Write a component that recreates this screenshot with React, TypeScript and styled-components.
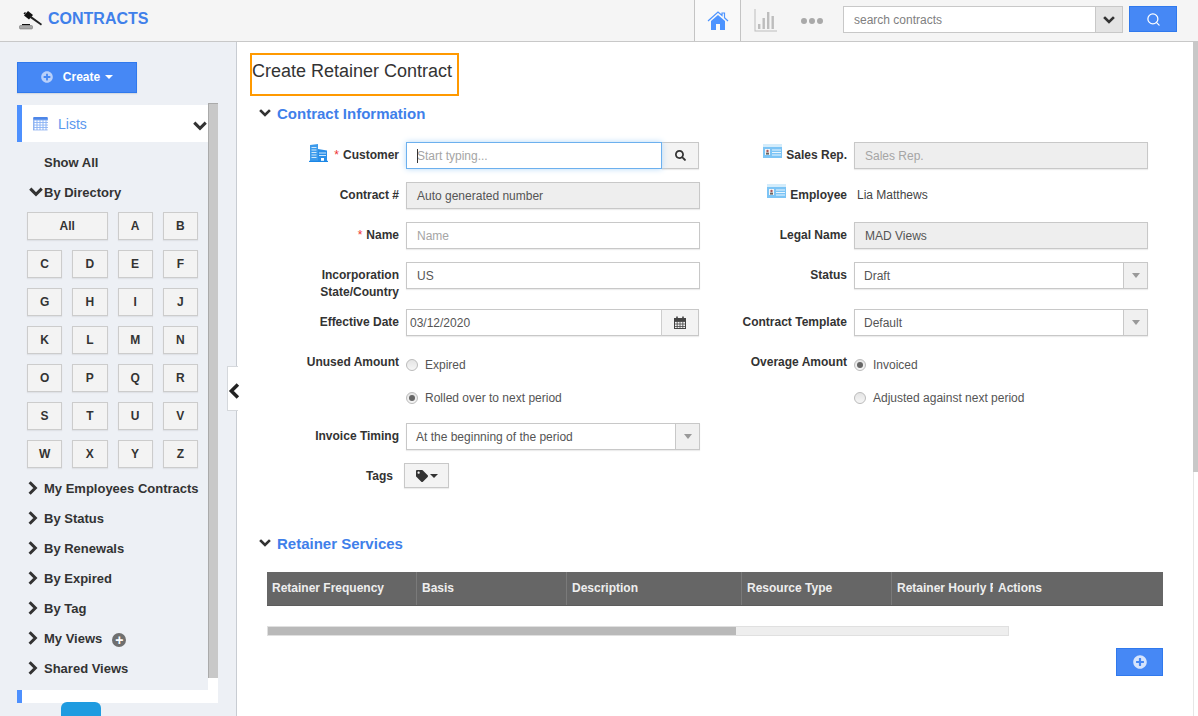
import styled, { createGlobalStyle } from "styled-components";
import { FaPlusCircle, FaSearch, FaTag } from "react-icons/fa";
import { Search } from "lucide-react";

const GlobalStyle = createGlobalStyle`
  html, body {
    margin: 0;
    height: 100%;
    overflow: hidden;
    background: #fff;
  }
  * { box-sizing: border-box; }
  body {
    font-family: "Liberation Sans", Arial, sans-serif;
    font-size: 12px;
    color: #333;
  }
`;

const Page = styled.div`
  width: 1198px;
  height: 716px;
  display: flex;
  flex-direction: column;
  overflow: hidden;
  position: relative;
`;

const Header = styled.header`
  height: 42px;
  flex: none;
  display: flex;
  align-items: stretch;
  background: #f5f5f5;
  border-bottom: 1px solid #c8c8c8;
`;
const Brand = styled.div`
  display: flex;
  align-items: flex-start;
  gap: 5px;
  padding: 10px 0 0 19px;
  margin-right: auto;
  color: #3f80ea;
  font-size: 16px;
  font-weight: bold;
  line-height: 18px;
`;
const HomeTab = styled.div`
  width: 47px;
  display: flex;
  align-items: center;
  justify-content: center;
  border-left: 1px solid #c4c4c4;
  border-right: 1px solid #c4c4c4;
  background: #f9f9f9;
`;
const ToolIcon = styled.div`
  display: flex;
  align-items: center;
  margin-left: ${(p: { $left: number }) => p.$left}px;
`;
const SearchBox = styled.div`
  width: 280px;
  height: 27px;
  margin: 6px 0 0 20px;
  display: flex;
  border: 1px solid #c8c8c8;
  background: #fff;
`;
const SearchText = styled.div`
  flex: 1;
  padding-left: 10px;
  line-height: 26px;
  color: #808080;
`;
const SearchCaret = styled.div`
  width: 27px;
  display: flex;
  align-items: center;
  justify-content: center;
  background: #e4e4e4;
  border-left: 1px solid #c8c8c8;
`;
const BlueButton = styled.button`
  display: flex;
  align-items: center;
  justify-content: center;
  padding: 0;
  color: #fff;
  background: #4688f5;
  border: 1px solid #3079ed;
  font-family: inherit;
`;
const SearchButton = styled(BlueButton)`
  width: 48px;
  height: 26px;
  margin: 6px 21px 0 6px;
`;

const Body = styled.div`
  flex: 1;
  display: flex;
  min-height: 0;
`;
const Sidebar = styled.aside`
  width: 237px;
  flex: none;
  padding: 20px 0 0 17px;
  background: #edf0f5;
  border-right: 1px solid #c8ccd2;
  overflow: hidden;
`;
const CreateButton = styled(BlueButton)`
  width: 120px;
  height: 31px;
  gap: 10px;
  padding-bottom: 2px;
  margin-bottom: 10px;
  font-size: 12px;
  font-weight: bold;
  box-shadow: 0 1px 1px #d5dae2;
`;
const Caret = styled.span`
  display: inline-block;
  margin-left: 5px;
  vertical-align: middle;
  border-top: 4px solid currentColor;
  border-left: 4px solid transparent;
  border-right: 4px solid transparent;
`;
const ScrollPane = styled.div`
  width: 201px;
  display: flex;
`;
const SideContent = styled.div`
  width: 191px;
  padding-top: 2px;
`;
const SideScroll = styled.div`
  width: 10px;
  height: 600px;
  background: #fff;
`;
const SideThumb = styled.div`
  height: 575px;
  background: #c8c8c8;
  border-left: 1px solid #aaa;
  border-top: 1px solid #aaa;
`;
const ListsHead = styled.div`
  height: 37px;
  display: flex;
  align-items: center;
  gap: 9px;
  padding: 0 1px 0 10px;
  margin-bottom: 5px;
  background: #fff;
  border-left: 5px solid #4d90fe;
  color: #5a97ee;
  font-size: 14px;
`;
const ListsTitle = styled.span`
  flex: 1;
`;
const ListsToggle = styled.span`
  display: flex;
  margin-top: 4px;
`;
const TreeRow = styled.div`
  height: 30px;
  display: flex;
  align-items: center;
  padding-left: 12px;
  font-size: 13px;
  font-weight: bold;
  color: #333;
`;
const TreeTwist = styled.span<{ $nudge: number }>`
  width: ${(p) => 15 - p.$nudge}px;
  margin-right: ${(p) => p.$nudge}px;
  display: flex;
  justify-content: center;
  flex: none;
`;
const TreeLabel = styled.span`
  margin-left: ${(p: { $plain?: boolean }) => (p.$plain ? "15px" : "0")};
`;
const PlusBadge = styled.span`
  display: inline-flex;
  align-items: center;
  justify-content: center;
  width: 14px;
  height: 14px;
  margin: 3px 0 0 10px;
  border-radius: 50%;
  background: #6f6f6f;
  color: #fff;
  font-size: 14px;
  line-height: 14px;
`;
const Directory = styled.div`
  display: grid;
  width: 171px;
  margin: 5px 0 5px 10px;
  grid-template-columns: repeat(4, 1fr);
  grid-auto-rows: 28px;
  gap: 10px;
`;
const LetterButton = styled.button<{ $wide?: boolean }>`
  padding: 0;
  grid-column: ${(p) => (p.$wide ? "span 2" : "auto")};
  background: #f3f3f3;
  border: 1px solid #ccc;
  box-shadow: 0 1px 1px #dfe2e7;
  color: #333;
  font-family: inherit;
  font-size: 12px;
  font-weight: bold;
`;
const ListsFoot = styled.div`
  height: 13px;
  margin-top: 7px;
  background: #fff;
  border-left: 5px solid #4d90fe;
`;
const BlueTab = styled.div`
  position: absolute;
  left: 61px;
  top: 702px;
  width: 40px;
  height: 20px;
  border-radius: 6px 6px 0 0;
  background: #1f9be0;
`;
const CollapseHandle = styled.div`
  position: absolute;
  left: 227px;
  top: 366px;
  width: 11px;
  height: 45px;
  display: flex;
  align-items: center;
  justify-content: center;
  padding: 5px 0 0 1px;
  background: #fff;
  border: 1px solid #d5d8dc;
  border-right: none;
`;

const Main = styled.main`
  flex: 1;
  display: flex;
  min-width: 0;
`;
const Content = styled.div`
  flex: 1;
  min-width: 0;
  padding: 11px 0 0 13px;
`;
const PageScroll = styled.div`
  width: 5px;
  flex: none;
  background: #fff;
  border-left: 1px solid #e6e6e6;
`;
const PageThumb = styled.div`
  height: 430px;
  margin-left: -1px;
  background: #c8c8c8;
`;
const TitleBox = styled.h1`
  width: 209px;
  height: 43px;
  margin: 0;
  border: 2px solid #ff9900;
  font-size: 18px;
  font-weight: normal;
  line-height: 33px;
  color: #333;
  white-space: nowrap;
`;
const SectionHead = styled.h2<{ $top: number }>`
  display: flex;
  align-items: center;
  gap: 6px;
  height: 20px;
  margin: ${(p) => p.$top}px 0 0 9px;
  font-size: 15px;
  font-weight: bold;
  color: #3f80ea;
`;
const FormColumns = styled.div`
  display: flex;
  gap: 15px;
  margin: 19px 0 0 17px;
`;
const FormColumn = styled.div`
  width: 433px;
`;
const Field = styled.div<{ $bottom?: number }>`
  display: grid;
  grid-template-columns: 132px 294px;
  column-gap: 7px;
  margin-bottom: ${(p) => p.$bottom ?? 13}px;
  min-height: 27px;
`;
const Label = styled.label`
  display: flex;
  justify-content: flex-end;
  align-items: flex-start;
  gap: 4px;
  padding-top: 6px;
  font-weight: bold;
  line-height: 14px;
  color: #333;
  text-align: right;
  white-space: nowrap;
`;
const TallLabel = styled(Label)`
  padding-top: 5px;
  line-height: 17px;
`;
const Required = styled.span`
  color: #e33;
  font-weight: normal;
`;
const LabelIcon = styled.span<{ $gap?: number }>`
  margin: -4px ${(p) => p.$gap ?? 0}px 0 0;
`;
const Input = styled.div<{ $readOnly?: boolean; $muted?: boolean }>`
  height: 27px;
  padding-left: 10px;
  line-height: 26px;
  background: ${(p) => (p.$readOnly ? "#eee" : "#fff")};
  border: 1px solid #c8c8c8;
  box-shadow: 0 1px 1px #ececec;
  color: ${(p) => (p.$muted ? "#a5a5a5" : "#555")};
  white-space: nowrap;
`;
const Joined = styled.div`
  display: flex;
  height: 27px;
  width: 293px;
`;
const FocusInput = styled(Input)`
  flex: 1;
  padding-left: 10px;
  border-color: #6cb0ee;
  box-shadow: 0 0 6px #b5d8f7;
  position: relative;
`;
const TextCursor = styled.span`
  position: absolute;
  left: 10px;
  top: 6px;
  width: 1px;
  height: 14px;
  background: #333;
`;
const DateInput = styled(Input)`
  flex: 1;
  padding-left: 3px;
`;
const AddOn = styled.div`
  width: 37px;
  display: flex;
  align-items: center;
  justify-content: center;
  background: #f3f3f3;
  border: 1px solid #c8c8c8;
  border-left: none;
  box-shadow: 0 1px 1px #ececec;
`;
const SelectBox = styled(Input)`
  display: flex;
  padding-left: 9px;
`;
const SelectValue = styled.span`
  flex: 1;
`;
const SelectArrow = styled.span`
  width: 24px;
  display: flex;
  align-items: center;
  justify-content: center;
  background: #f0f0f0;
  border-left: 1px solid #c8c8c8;
  &::after {
    content: "";
    border-top: 5px solid #999;
    border-left: 4px solid transparent;
    border-right: 4px solid transparent;
  }
`;
const StaticValue = styled.div`
  padding-left: 3px;
  padding-top: 6px;
  line-height: 14px;
  color: #444;
`;
const RadioList = styled.div`
  display: flex;
  flex-direction: column;
  gap: 19px;
  padding-top: 9px;
`;
const RadioRow = styled.div`
  display: flex;
  align-items: center;
  gap: 7px;
  height: 14px;
  color: #555;
`;
const RadioDot = styled.span<{ $checked?: boolean }>`
  width: 12px;
  height: 12px;
  display: flex;
  align-items: center;
  justify-content: center;
  border-radius: 50%;
  border: 1px solid #bbb;
  background: linear-gradient(#e4e4e4, #f6f6f6);
  &::after {
    content: "";
    width: 6px;
    height: 6px;
    border-radius: 50%;
    background: ${(p) => (p.$checked ? "#666" : "transparent")};
  }
`;
const TagButton = styled.button`
  width: 45px;
  height: 25px;
  margin-left: -2px;
  display: flex;
  align-items: center;
  justify-content: center;
  padding: 0;
  background: #f3f3f3;
  border: 1px solid #c8c8c8;
  box-shadow: 0 1px 1px #ececec;
  color: #333;
`;
const TagCaret = styled(Caret)`
  margin-left: 2px;
`;
const TagLabel = styled(Label)`
  padding-right: 6px;
`;

const TableWrap = styled.div`
  width: 896px;
  margin: 19px 0 0 17px;
`;
const TableHead = styled.div`
  height: 34px;
  display: flex;
  background: #666;
  border-bottom: 1px solid #5c5c5c;
  color: #eee;
  font-weight: bold;
`;
const HeadCell = styled.div<{ $width: number; $plain?: boolean }>`
  width: ${(p) => p.$width}px;
  flex: none;
  padding-left: 5px;
  line-height: 32px;
  overflow: hidden;
  white-space: nowrap;
  border-right: ${(p) => (p.$plain ? "none" : "1px solid #7a7a7a")};
`;
const TableScroll = styled.div`
  width: 742px;
  height: 10px;
  margin-top: 20px;
  background: #eee;
  border: 1px solid #e0e0e0;
`;
const TableThumb = styled.div`
  width: 468px;
  height: 8px;
  background: #b9b9b9;
`;
const AddRow = styled.div`
  display: flex;
  justify-content: flex-end;
  margin-top: 12px;
`;
const AddButton = styled(BlueButton)`
  width: 47px;
  height: 28px;
  color: #d6e4fc;
`;
const ChevronSvg = styled.svg`
  flex: none;
`;

function Chevron({ dir = "down", size = 12, color = "#333" }: { dir?: "down" | "right" | "left"; size?: number; color?: string }) {
  const d = dir === "down" ? "M2 4 L6 8 L10 4" : dir === "right" ? "M4 2 L8 6 L4 10" : "M8 2 L4 6 L8 10";
  return (
    <ChevronSvg width={size} height={size} viewBox="0 0 12 12" fill="none">
      <path d={d} stroke={color} strokeWidth="2.6" strokeLinecap="square" />
    </ChevronSvg>
  );
}

function GavelIcon() {
  return (
    <svg width="24" height="20" viewBox="0 0 24 20">
      <path d="M5 5.5 L9 1 L14 5 L10 9.5 Z" fill="#111" />
      <path d="M4.5 3.5 L6 2 L7 3 L5.5 4.5 Z" fill="#111" />
      <path d="M11.5 5.5 L23 14 L22 15.5 L10.5 7.5 Z" fill="#222" />
      <rect x="3" y="14" width="8" height="1.2" fill="#111" />
      <rect x="0.5" y="15.5" width="13" height="3.5" rx="1" fill="#a8a8a8" stroke="#666" strokeWidth="0.5" />
    </svg>
  );
}

function HomeIcon() {
  return (
    <svg width="22" height="22" viewBox="0 0 22 22" fill="#4d94ff">
      <path d="M4 11 L11 5 L18 11 V20 H13 V14 H9 V20 H4 Z" />
      <path d="M1 11 L11 2 L15 5.5 V3 H17.5 V7.7 L21 11" fill="none" stroke="#4d94ff" strokeWidth="1.2" />
    </svg>
  );
}

function BarsIcon() {
  return (
    <svg width="23" height="23" viewBox="0 0 23 23" fill="#bdbdbd">
      <path d="M0.5 0 H1.5 V21.5 H23 V22.5 H0.5 Z" />
      <rect x="4" y="15" width="2.4" height="5" />
      <rect x="8.5" y="9" width="2.4" height="11" />
      <rect x="13" y="3" width="2.4" height="17" />
      <rect x="17.5" y="7" width="2.4" height="13" />
    </svg>
  );
}

function DotsIcon() {
  return (
    <svg width="22" height="6" viewBox="0 0 22 6" fill="#a9a9a9">
      <circle cx="3" cy="3" r="3" />
      <circle cx="11" cy="3" r="3" />
      <circle cx="19" cy="3" r="3" />
    </svg>
  );
}

function CalendarGrid() {
  const cols = [2, 5, 8, 11, 14];
  const rows = [4.5, 7, 9.5, 12];
  return (
    <svg width="17" height="15" viewBox="0 0 16 15">
      <rect x="1" y="2" width="14" height="12" fill="#8db4f5" stroke="#6f9cea" strokeWidth="0.6" />
      <rect x="1" y="1" width="14" height="2.6" fill="#4d86e8" />
      {cols.map((x) => rows.map((y) => <rect key={`${x}-${y}`} x={x} y={y} width="2" height="1.6" fill="#fff" />))}
    </svg>
  );
}

function SmallCalendar() {
  return (
    <svg width="12" height="13" viewBox="0 0 12 13" fill="none" stroke="#444">
      <rect x="0.5" y="2.5" width="11" height="10" />
      <path d="M0.5 5.5 H11.5 M0.5 8 H11.5 M0.5 10.5 H11.5 M3.2 5.5 V12.5 M6 5.5 V12.5 M8.8 5.5 V12.5" strokeWidth="0.8" />
      <path d="M3 0.5 V3.5 M9 0.5 V3.5" strokeWidth="1.6" />
      <rect x="0.5" y="2.5" width="11" height="2.5" fill="#444" />
    </svg>
  );
}

function BuildingIcon() {
  return (
    <svg width="19" height="18" viewBox="0 0 19 18">
      <path d="M1 1 L9 0 V17 H1 Z" fill="#3d9bec" />
      <path d="M9 5 L18 6.5 V17 H9 Z" fill="#2b8fe8" />
      <path d="M2.5 3.5 H7.5 M2.5 6 H7.5 M2.5 8.5 H7.5 M2.5 11 H7.5 M2.5 13.5 H7.5 M10 9 H17 M10 11.5 H17" stroke="#cfe8fb" strokeWidth="1" />
      <rect x="12" y="14" width="3" height="3" fill="#fff" />
      <path d="M0 17.4 H19" stroke="#1a86e6" strokeWidth="1.2" />
    </svg>
  );
}

function IdCardIcon() {
  return (
    <svg width="19" height="14" viewBox="0 0 19 14">
      <rect y="0" width="19" height="14" fill="#7cc4f5" />
      <rect y="0" width="19" height="3" fill="#d3ecfb" />
      <rect x="2" y="5" width="5" height="6" fill="#f4f4f4" />
      <circle cx="4.5" cy="7" r="1.2" fill="#a55" />
      <rect x="3" y="8.6" width="3" height="2" fill="#666" />
      <path d="M9 6 H18 M9 8.5 H18 M9 11 H18" stroke="#e8f5fe" strokeWidth="1" />
    </svg>
  );
}

const letters = "ABCDEFGHIJKLMNOPQRSTUVWXYZ".split("");
const treeItems = ["My Employees Contracts", "By Status", "By Renewals", "By Expired", "By Tag", "My Views", "Shared Views"];
const columns = [
  { title: "Retainer Frequency", width: 150 },
  { title: "Basis", width: 150 },
  { title: "Description", width: 175 },
  { title: "Resource Type", width: 150 },
  { title: "Retainer Hourly Rate", width: 101, plain: true },
  { title: "Actions", width: 170, plain: true },
];

export default function App() {
  return (
    <Page>
      <GlobalStyle />
      <Header>
        <Brand>
          <GavelIcon />
          CONTRACTS
        </Brand>
        <HomeTab>
          <HomeIcon />
        </HomeTab>
        <ToolIcon $left={13}>
          <BarsIcon />
        </ToolIcon>
        <ToolIcon $left={24}>
          <DotsIcon />
        </ToolIcon>
        <SearchBox>
          <SearchText>search contracts</SearchText>
          <SearchCaret>
            <Chevron />
          </SearchCaret>
        </SearchBox>
        <SearchButton aria-label="Search">
          <Search size={15} strokeWidth={2} />
        </SearchButton>
      </Header>
      <Body>
        <Sidebar>
          <CreateButton>
            <FaPlusCircle size={12} color="#b9d0fa" />
            <span>
              Create
              <Caret />
            </span>
          </CreateButton>
          <ScrollPane>
            <SideContent>
              <ListsHead>
                <CalendarGrid />
                <ListsTitle>Lists</ListsTitle>
                <ListsToggle>
                  <Chevron size={14} />
                </ListsToggle>
              </ListsHead>
              <TreeRow>
                <TreeLabel $plain>Show All</TreeLabel>
              </TreeRow>
              <TreeRow>
                <TreeTwist $nudge={2}>
                  <Chevron size={14} />
                </TreeTwist>
                <TreeLabel>By Directory</TreeLabel>
              </TreeRow>
              <Directory>
                <LetterButton $wide>All</LetterButton>
                {letters.map((l) => (
                  <LetterButton key={l}>{l}</LetterButton>
                ))}
              </Directory>
              {treeItems.map((item) => (
                <TreeRow key={item}>
                  <TreeTwist $nudge={7}>
                    <Chevron dir="right" size={14} />
                  </TreeTwist>
                  <TreeLabel>{item}</TreeLabel>
                  {item === "My Views" && <PlusBadge>+</PlusBadge>}
                </TreeRow>
              ))}
              <ListsFoot />
            </SideContent>
            <SideScroll>
              <SideThumb />
            </SideScroll>
          </ScrollPane>
        </Sidebar>
        <Main>
          <Content>
            <TitleBox>Create Retainer Contract</TitleBox>
            <SectionHead $top={7}>
              <Chevron size={12} />
              Contract Information
            </SectionHead>
            <FormColumns>
              <FormColumn>
                <Field>
                  <Label>
                    <LabelIcon $gap={2}>
                      <BuildingIcon />
                    </LabelIcon>
                    <Required>*</Required>
                    Customer
                  </Label>
                  <Joined>
                    <FocusInput $muted>
                      <TextCursor />
                      Start typing...
                    </FocusInput>
                    <AddOn>
                      <FaSearch size={11} color="#333" />
                    </AddOn>
                  </Joined>
                </Field>
                <Field>
                  <Label>Contract #</Label>
                  <Input $readOnly>Auto generated number</Input>
                </Field>
                <Field>
                  <Label>
                    <Required>*</Required>
                    Name
                  </Label>
                  <Input $muted>Name</Input>
                </Field>
                <Field $bottom={8}>
                  <TallLabel>
                    Incorporation
                    <br />
                    State/Country
                  </TallLabel>
                  <Input>US</Input>
                </Field>
                <Field>
                  <Label>Effective Date</Label>
                  <Joined>
                    <DateInput>03/12/2020</DateInput>
                    <AddOn>
                      <SmallCalendar />
                    </AddOn>
                  </Joined>
                </Field>
                <Field $bottom={18}>
                  <Label>Unused Amount</Label>
                  <RadioList>
                    <RadioRow>
                      <RadioDot />
                      Expired
                    </RadioRow>
                    <RadioRow>
                      <RadioDot $checked />
                      Rolled over to next period
                    </RadioRow>
                  </RadioList>
                </Field>
                <Field>
                  <Label>Invoice Timing</Label>
                  <SelectBox>
                    <SelectValue>At the beginning of the period</SelectValue>
                    <SelectArrow />
                  </SelectBox>
                </Field>
                <Field $bottom={0}>
                  <TagLabel>Tags</TagLabel>
                  <TagButton aria-label="Tags">
                    <FaTag size={12} />
                    <TagCaret />
                  </TagButton>
                </Field>
              </FormColumn>
              <FormColumn>
                <Field>
                  <Label>
                    <LabelIcon>
                      <IdCardIcon />
                    </LabelIcon>
                    Sales Rep.
                  </Label>
                  <Input $readOnly $muted>
                    Sales Rep.
                  </Input>
                </Field>
                <Field>
                  <Label>
                    <LabelIcon>
                      <IdCardIcon />
                    </LabelIcon>
                    Employee
                  </Label>
                  <StaticValue>Lia Matthews</StaticValue>
                </Field>
                <Field>
                  <Label>Legal Name</Label>
                  <Input $readOnly>MAD Views</Input>
                </Field>
                <Field $bottom={20}>
                  <Label>Status</Label>
                  <SelectBox>
                    <SelectValue>Draft</SelectValue>
                    <SelectArrow />
                  </SelectBox>
                </Field>
                <Field>
                  <Label>Contract Template</Label>
                  <SelectBox>
                    <SelectValue>Default</SelectValue>
                    <SelectArrow />
                  </SelectBox>
                </Field>
                <Field>
                  <Label>Overage Amount</Label>
                  <RadioList>
                    <RadioRow>
                      <RadioDot $checked />
                      Invoiced
                    </RadioRow>
                    <RadioRow>
                      <RadioDot />
                      Adjusted against next period
                    </RadioRow>
                  </RadioList>
                </Field>
              </FormColumn>
            </FormColumns>
            <SectionHead $top={43}>
              <Chevron size={12} />
              Retainer Services
            </SectionHead>
            <TableWrap>
              <TableHead>
                {columns.map((c) => (
                  <HeadCell key={c.title} $width={c.width} $plain={c.plain}>
                    {c.title}
                  </HeadCell>
                ))}
              </TableHead>
              <TableScroll>
                <TableThumb />
              </TableScroll>
              <AddRow>
                <AddButton aria-label="Add service">
                  <FaPlusCircle size={14} />
                </AddButton>
              </AddRow>
            </TableWrap>
          </Content>
          <PageScroll>
            <PageThumb />
          </PageScroll>
        </Main>
      </Body>
      <CollapseHandle>
        <Chevron dir="left" size={16} color="#222" />
      </CollapseHandle>
      <BlueTab />
    </Page>
  );
}
